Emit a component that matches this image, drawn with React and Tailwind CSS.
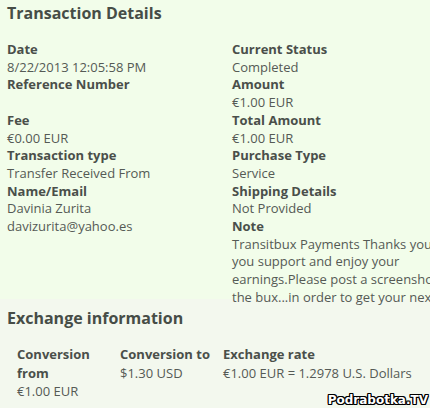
import React from "react";

const F = { fontFamily: '"Open Sans", "Liberation Sans", sans-serif' };

function Field({ label, children }) {
  return (
    <div>
      <div className="font-bold text-[#4a4f4a]">{label}</div>
      <div className="text-[#555a55] whitespace-nowrap">{children}</div>
    </div>
  );
}

export default function App() {
  return (
    <div
      className="w-[430px] h-[408px] overflow-hidden relative text-[13px] leading-[17.7px]"
      style={F}
    >
      <div className="bg-[#f2fdea] h-[299px] px-[7px]">
        <h1 className="text-[16px] leading-[26px] font-bold text-[#464d46]">
          Transaction Details
        </h1>
        <div className="grid grid-cols-[225px_1fr] mt-[15px]">
          <div>
            <Field label="Date">8/22/2013 12:05:58 PM</Field>
            <Field label="Reference Number">&nbsp;</Field>
            <Field label="Fee">€0.00 EUR</Field>
            <Field label="Transaction type">Transfer Received From</Field>
            <Field label="Name/Email">
              Davinia Zurita
              <br />
              davizurita@yahoo.es
            </Field>
          </div>
          <div>
            <Field label="Current Status">Completed</Field>
            <Field label="Amount">€1.00 EUR</Field>
            <Field label="Total Amount">€1.00 EUR</Field>
            <Field label="Purchase Type">Service</Field>
            <Field label="Shipping Details">Not Provided</Field>
            <Field label="Note">
              Transitbux Payments Thanks you for
              <br />
              you support and enjoy your
              <br />
              earnings.Please post a screenshot on
              <br />
              the bux...in order to get your next
            </Field>
          </div>
        </div>
      </div>
      <div className="bg-[#f3f8ee] h-[109px] px-[7px]">
        <h2 className="text-[16px] leading-[26px] font-bold text-[#464d46] pt-[6px]">
          Exchange information
        </h2>
        <div className="grid grid-cols-[103px_103px_1fr] pl-[10px] mt-[14px] leading-[18.5px]">
          <div>
            <div className="font-bold text-[#4a4f4a] w-[90px]">Conversion from</div>
            <div className="text-[#555a55]">€1.00 EUR</div>
          </div>
          <div>
            <div className="font-bold text-[#4a4f4a]">Conversion to</div>
            <div className="text-[#555a55]">$1.30 USD</div>
          </div>
          <div>
            <div className="font-bold text-[#4a4f4a]">Exchange rate</div>
            <div className="text-[#555a55] whitespace-nowrap">€1.00 EUR = 1.2978 U.S. Dollars</div>
          </div>
        </div>
      </div>
      <div
        className="absolute right-[2px] bottom-[1px] text-[12px] leading-[14px] font-bold text-white [text-shadow:1px_1px_0_#000,-1px_-1px_0_#000,1px_-1px_0_#000,-1px_1px_0_#000,0_1px_0_#000,0_-1px_0_#000,1px_0_0_#000,-1px_0_0_#000]"
        style={{ fontFamily: '"DejaVu Sans", sans-serif' }}
      >
        Podrabotka.TV
      </div>
    </div>
  );
}
